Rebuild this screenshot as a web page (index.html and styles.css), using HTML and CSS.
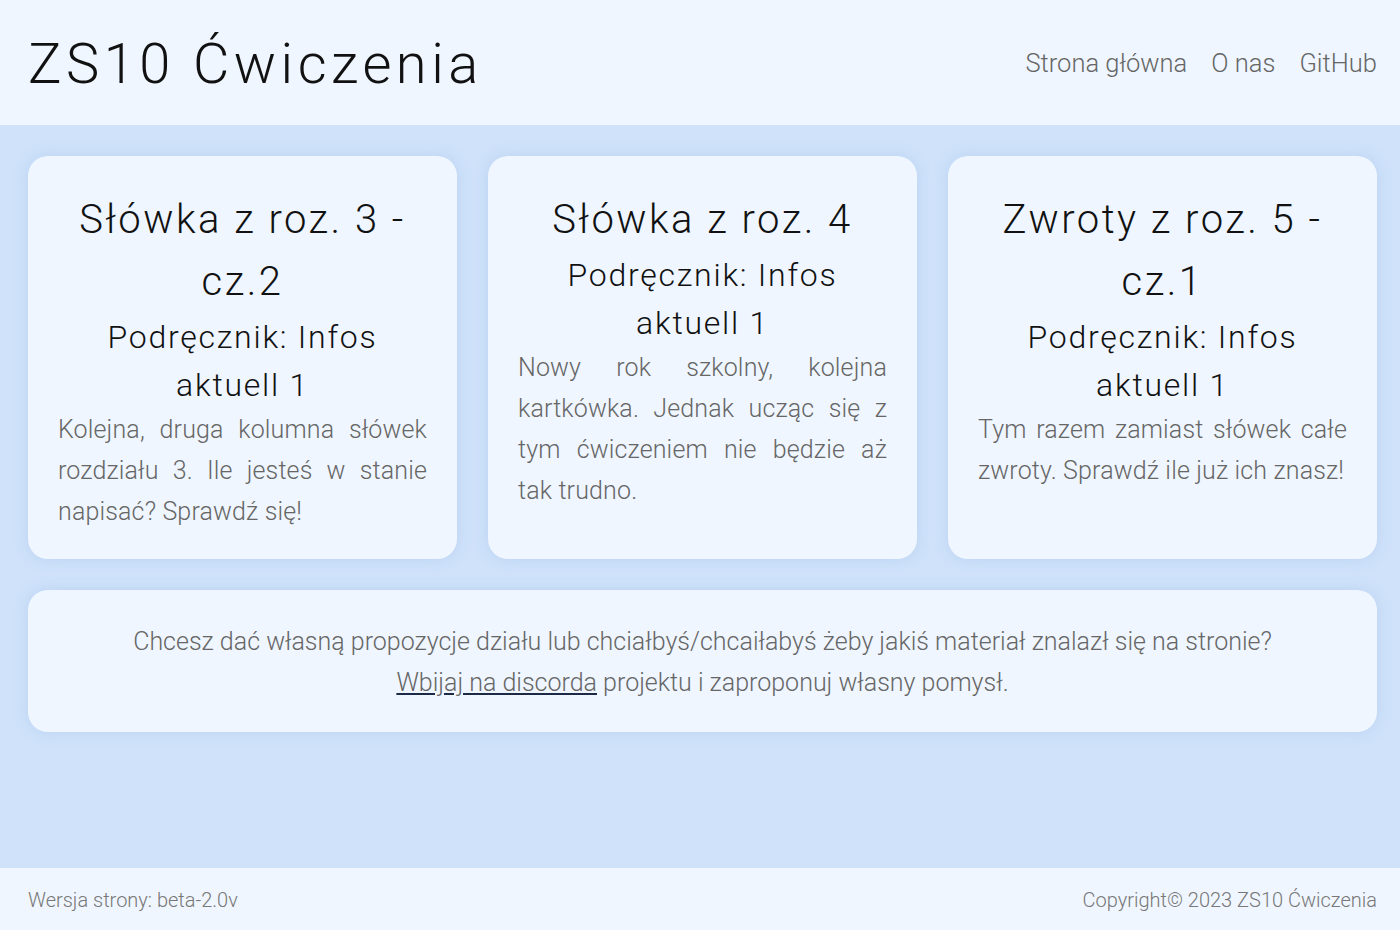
FILE: index.html
```html
<!DOCTYPE html>
<html lang="pl">
<head>
<meta charset="utf-8">
<title>ZS10 Ćwiczenia</title>
<link rel="stylesheet" href="styles.css">
</head>
<body>
<header class="top">
  <h1 class="logo">ZS10 Ćwiczenia</h1>
  <nav class="nav">
    <a href="#">Strona główna</a>
    <a href="#">O nas</a>
    <a href="#">GitHub</a>
  </nav>
</header>
<main class="main">
  <section class="cards">
    <article class="card">
      <h2 class="card-title">Słówka z roz. 3 - cz.2</h2>
      <h3 class="card-sub">Podręcznik: Infos aktuell 1</h3>
      <p class="card-text">Kolejna, druga kolumna słówek rozdziału 3. Ile jesteś w stanie napisać? Sprawdź się!</p>
    </article>
    <article class="card">
      <h2 class="card-title">Słówka z roz. 4</h2>
      <h3 class="card-sub">Podręcznik: Infos aktuell 1</h3>
      <p class="card-text">Nowy rok szkolny, kolejna kartkówka. Jednak ucząc się z tym ćwiczeniem nie będzie aż tak trudno.</p>
    </article>
    <article class="card">
      <h2 class="card-title">Zwroty z roz. 5 - cz.1</h2>
      <h3 class="card-sub">Podręcznik: Infos aktuell 1</h3>
      <p class="card-text">Tym razem zamiast słówek całe zwroty. Sprawdź ile już ich znasz!</p>
    </article>
  </section>
  <section class="info">
    <p>Chcesz dać własną propozycje działu lub chciałbyś/chcaiłabyś żeby jakiś materiał znalazł się na stronie?<br><a href="#" class="info-link">Wbijaj na discorda</a> projektu i zaproponuj własny pomysł.</p>
  </section>
</main>
<footer class="foot">
  <span>Wersja strony: beta-2.0v</span>
  <span>Copyright© 2023 ZS10 Ćwiczenia</span>
</footer>
</body>
</html>
```
FILE: styles.css
```css
* { box-sizing: border-box; }
html, body { margin: 0; padding: 0; }
body {
  font-family: Roboto, "Liberation Sans", sans-serif;
  font-weight: 300;
  background: #cfe2fa;
  min-height: 100vh;
  display: flex;
  flex-direction: column;
  color: #111;
}
.top {
  background: #eff6ff;
  height: 125px;
  display: flex;
  align-items: center;
  justify-content: space-between;
  padding: 0 23px 0 28px;
}
.logo {
  margin: 0;
  font-size: 56px;
  font-weight: 300;
  letter-spacing: 4.5px;
  color: #111;
  line-height: 1;
  padding-top: 2px;
}
.nav {
  display: flex;
  gap: 24px;
}
.nav a {
  color: #666;
  text-decoration: none;
  font-size: 25.5px;
  font-weight: 300;
}
.main {
  flex: 1;
  padding: 31px 23px 31px 28px;
  display: flex;
  flex-direction: column;
  gap: 31px;
}
.cards {
  display: grid;
  grid-template-columns: repeat(3, 1fr);
  gap: 31px;
}
.card, .info {
  background: #eff6ff;
  border-radius: 20px;
  box-shadow: 0 0 14px rgba(150, 180, 225, 0.35);
}
.card {
  padding: 33px 30px 27px;
  text-align: center;
}
.card-title {
  margin: 0;
  font-size: 40px;
  line-height: 62px;
  font-weight: 300;
  letter-spacing: 2.5px;
  color: #111;
}
.card-sub {
  margin: 0;
  font-size: 32px;
  line-height: 48px;
  font-weight: 300;
  letter-spacing: 1.75px;
  color: #111;
}
.card-text {
  margin: 0;
  font-size: 25px;
  line-height: 41px;
  letter-spacing: 0.15px;
  text-align: justify;
  color: #666;
}
.info {
  padding: 31px 30px 29px;
  text-align: center;
}
.info p {
  margin: 0;
  font-size: 25px;
  line-height: 41px;
  color: #666;
}
.info-link {
  color: #666;
  text-decoration: underline;
  text-decoration-color: #1c2a48;
}
.foot {
  background: #eff6ff;
  height: 62px;
  display: flex;
  align-items: center;
  justify-content: space-between;
  padding: 2px 23px 0 28px;
  font-size: 20px;
  color: #777;
}
```
